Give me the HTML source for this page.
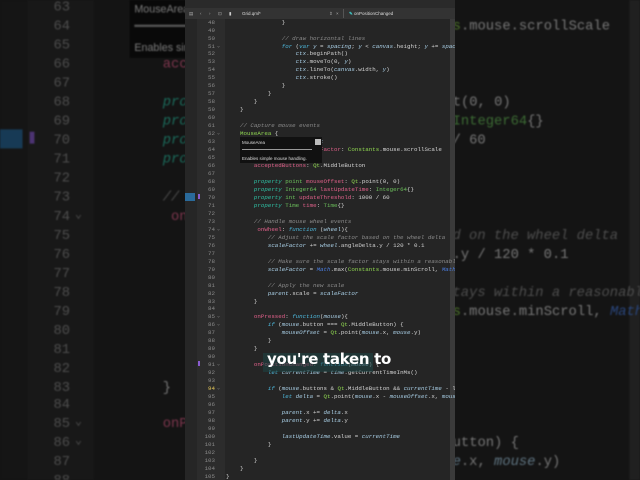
<!DOCTYPE html>
<html><head><meta charset="utf-8"><style>
html,body{margin:0;padding:0;background:#151515;width:640px;height:480px;overflow:hidden;position:relative}
#bgwrap{position:absolute;left:0;top:0;width:640px;height:480px;overflow:hidden;filter:brightness(0.55) blur(0.7px)}
#bgwrap .inner{position:absolute;left:0;top:0;width:640px;height:480px;transform-origin:0 0;transform:translate(-441.6px,-330px) scale(2.38)}
.panel{position:absolute;left:185px;top:0;width:270px;height:480px;overflow:hidden;background:#252525;font-family:"Liberation Mono",monospace}
.topbar{position:absolute;left:0;top:0;width:270px;height:8px;background:#2a2a2a}
.tool{position:absolute;left:0;top:8px;width:270px;height:11px;background:#333;font-family:"Liberation Sans",sans-serif;font-size:4.5px;color:#ddd}
.tool span{position:absolute;top:3px}
.lstrip{position:absolute;left:0;top:19px;width:12px;height:461px;background:#262626}
.ncol{position:absolute;left:12px;top:19px;width:28px;height:461px;background:#2c2c2c}
.rbar{position:absolute;right:0;top:19px;width:5px;height:461px;background:#3a3a3a}
.nums{position:absolute;left:12px;top:18.6px;width:18px;text-align:right;font-size:5.8px;line-height:7.97px;color:#8a8a8a;white-space:pre}
.folds{position:absolute;left:32px;top:18.6px;font-size:5px;line-height:7.97px;color:#888;white-space:pre}
.code{position:absolute;left:55px;top:18.6px;width:400px;font-size:5.8px;line-height:7.97px;color:#d4d4d4}
.code div{height:7.97px;white-space:pre}
.c{color:#8b8b8b;font-style:italic}
.k{color:#4db8dc;font-style:italic}
.p{color:#2fc0a4;font-style:italic}
.t{color:#6cc05c}
.i{color:#a9cfe6;font-style:italic}
.r{color:#e0608a}
.q{color:#8fd650}
.m{color:#4a7de0;font-style:italic}
.tip{position:absolute;left:55px;top:137px;width:82px;height:26px;background:#111;font-family:"Liberation Sans",sans-serif;font-size:4.5px;color:#ddd}
.overlay{position:absolute;left:263px;top:353px;width:110px;height:19px;background:rgba(30,70,70,0.55)}
.otext{position:absolute;left:267px;top:350px;font-family:"DejaVu Sans","Liberation Sans",sans-serif;font-weight:bold;font-size:15px;color:#fff;letter-spacing:-0.3px;white-space:nowrap}
</style></head><body>
<div id="bgwrap"><div class="inner" id="bginner"></div></div>
<div class="panel" id="panel">
<div class="topbar"></div>
<div class="tool">
<span style="left:4px;color:#aaa">▤</span><span style="left:15px;color:#aaa">‹</span><span style="left:24px;color:#aaa">›</span><span style="left:33px;color:#aaa">⊡</span><span style="left:44px;color:#ccc">▮</span>
<span style="left:57px">Grid.qml*</span><span style="left:144px;color:#aaa">⇕</span><span style="left:151px;color:#aaa">×</span>
<span style="left:158px;top:1px;height:9px;width:1px;background:#555"></span>
<span style="left:164px"><b style="color:#3fc4c4">✎</b> onPositionChanged</span>
</div>
<div class="lstrip"></div>
<div class="ncol"></div>
<div class="rbar"></div>
<div style="position:absolute;left:0;top:193px;width:10px;height:8px;background:#2a6a9a"></div>
<div style="position:absolute;left:13px;top:194px;width:2px;height:5px;background:#8a5cd0"></div>
<div style="position:absolute;left:13px;top:361px;width:2px;height:5px;background:#8a5cd0"></div>
<div class="nums">48
49
50
51
52
53
54
55
56
57
58
59
60
61
62
63
64
65
66
67
68
69
70
71
72
73
74
75
76
77
78
79
80
81
82
83
84
85
86
87
88
89
90
91
92
93
<span style="color:#e5c85a">94</span>
95
96
97
98
99
100
101
102
103
104
105</div>
<div class="folds">


⌄










⌄











⌄










⌄
⌄




⌄


⌄</div>
<div class="code">
<div>            }</div>
<div></div>
<div><span class="c">            // draw horizontal lines</span></div>
<div>            <span class="k">for</span> (<span class="k">var</span> <span class="i">y</span> = <span class="i">spacing</span>; <span class="i">y</span> &lt; <span class="i">canvas</span>.height; <span class="i">y</span> += <span class="i">spacing</span>) {</div>
<div>                <span class="i">ctx</span>.beginPath()</div>
<div>                <span class="i">ctx</span>.moveTo(0, <span class="i">y</span>)</div>
<div>                <span class="i">ctx</span>.lineTo(<span class="i">canvas</span>.width, <span class="i">y</span>)</div>
<div>                <span class="i">ctx</span>.stroke()</div>
<div>            }</div>
<div>        }</div>
<div>    }</div>
<div>}</div>
<div></div>
<div><span class="c">// Capture mouse events</span></div>
<div><span class="q">MouseArea</span> {</div>
<div>    <span class="r">anchors.fill</span>: <span class="i">parent</span></div>
<div>    <span class="p">property</span> <span class="t">real</span> <span class="r">scaleFactor</span>: <span class="q">Constants</span>.mouse.scrollScale</div>
<div>    <span class="r">hoverEnabled</span>: true</div>
<div>    <span class="r">acceptedButtons</span>: <span class="q">Qt</span>.MiddleButton</div>
<div></div>
<div>    <span class="p">property</span> <span class="t">point</span> <span class="r">mouseOffset</span>: <span class="q">Qt</span>.point(0, 0)</div>
<div>    <span class="p">property</span> <span class="t">Integer64</span> <span class="r">lastUpdateTime</span>: <span class="t">Integer64</span>{}</div>
<div>    <span class="p">property</span> <span class="t">int</span> <span class="r">updateThreshold</span>: 1000 / 60</div>
<div>    <span class="p">property</span> <span class="t">Time</span> <span class="r">time</span>: <span class="t">Time</span>{}</div>
<div></div>
<div><span class="c">    // Handle mouse wheel events</span></div>
<div>     <span class="r">onWheel</span>: <span class="k">function</span> (<span class="i">wheel</span>){</div>
<div><span class="c">        // Adjust the scale factor based on the wheel delta</span></div>
<div>        <span class="i">scaleFactor</span> += <span class="i">wheel</span>.angleDelta.y / 120 * 0.1</div>
<div></div>
<div><span class="c">        // Make sure the scale factor stays within a reasonable range</span></div>
<div>        <span class="i">scaleFactor</span> = <span class="m">Math</span>.max(<span class="q">Constants</span>.mouse.minScroll, <span class="m">Math</span>.min(1, 2))</div>
<div></div>
<div><span class="c">        // Apply the new scale</span></div>
<div>        <span class="i">parent</span>.scale = <span class="i">scaleFactor</span></div>
<div>    }</div>
<div></div>
<div>    <span class="r">onPressed</span>: <span class="k">function</span>(<span class="i">mouse</span>){</div>
<div>        <span class="k">if</span> (<span class="i">mouse</span>.button === <span class="q">Qt</span>.MiddleButton) {</div>
<div>            <span class="i">mouseOffset</span> = <span class="q">Qt</span>.point(<span class="i">mouse</span>.x, <span class="i">mouse</span>.y)</div>
<div>        }</div>
<div>    }</div>
<div></div>
<div>    <span class="r">onPositionChanged</span>: <span class="k">function</span>(<span class="i">mouse</span>) {</div>
<div>        <span class="k">let</span> <span class="i">currentTime</span> = <span class="i">time</span>.getCurrentTimeInMs()</div>
<div></div>
<div>        <span class="k">if</span> (<span class="i">mouse</span>.buttons &amp; <span class="q">Qt</span>.MiddleButton &amp;&amp; <span class="i">currentTime</span> - lastUpdateTime.value &gt; updateThreshold) {</div>
<div>            <span class="k">let</span> <span class="i">delta</span> = <span class="q">Qt</span>.point(<span class="i">mouse</span>.x - <span class="i">mouseOffset</span>.x, <span class="i">mouse</span>.y - <span class="i">mouseOffset</span>.y)</div>
<div></div>
<div>            <span class="i">parent</span>.x += <span class="i">delta</span>.x</div>
<div>            <span class="i">parent</span>.y += <span class="i">delta</span>.y</div>
<div></div>
<div>            <span class="i">lastUpdateTime</span>.value = <span class="i">currentTime</span></div>
<div>        }</div>
<div></div>
<div>    }</div>
<div>}</div>
<div style="margin-left:-14px">}</div>
</div>
<div class="tip">
<div style="position:absolute;left:2px;top:3px">MouseArea</div>
<div style="position:absolute;left:75px;top:2px;width:6px;height:6px;background:#bbb"></div>
<div style="position:absolute;left:2px;top:12px;width:70px;height:1px;background:#999"></div>
<div style="position:absolute;left:2px;top:19px">Enables simple mouse handling.</div>
</div>
</div>
<div class="overlay"></div>
<div class="otext">you're taken to</div>
<script>
var c=document.getElementById('panel').cloneNode(true);c.removeAttribute('id');document.getElementById('bginner').appendChild(c);
</script>
</body></html>
